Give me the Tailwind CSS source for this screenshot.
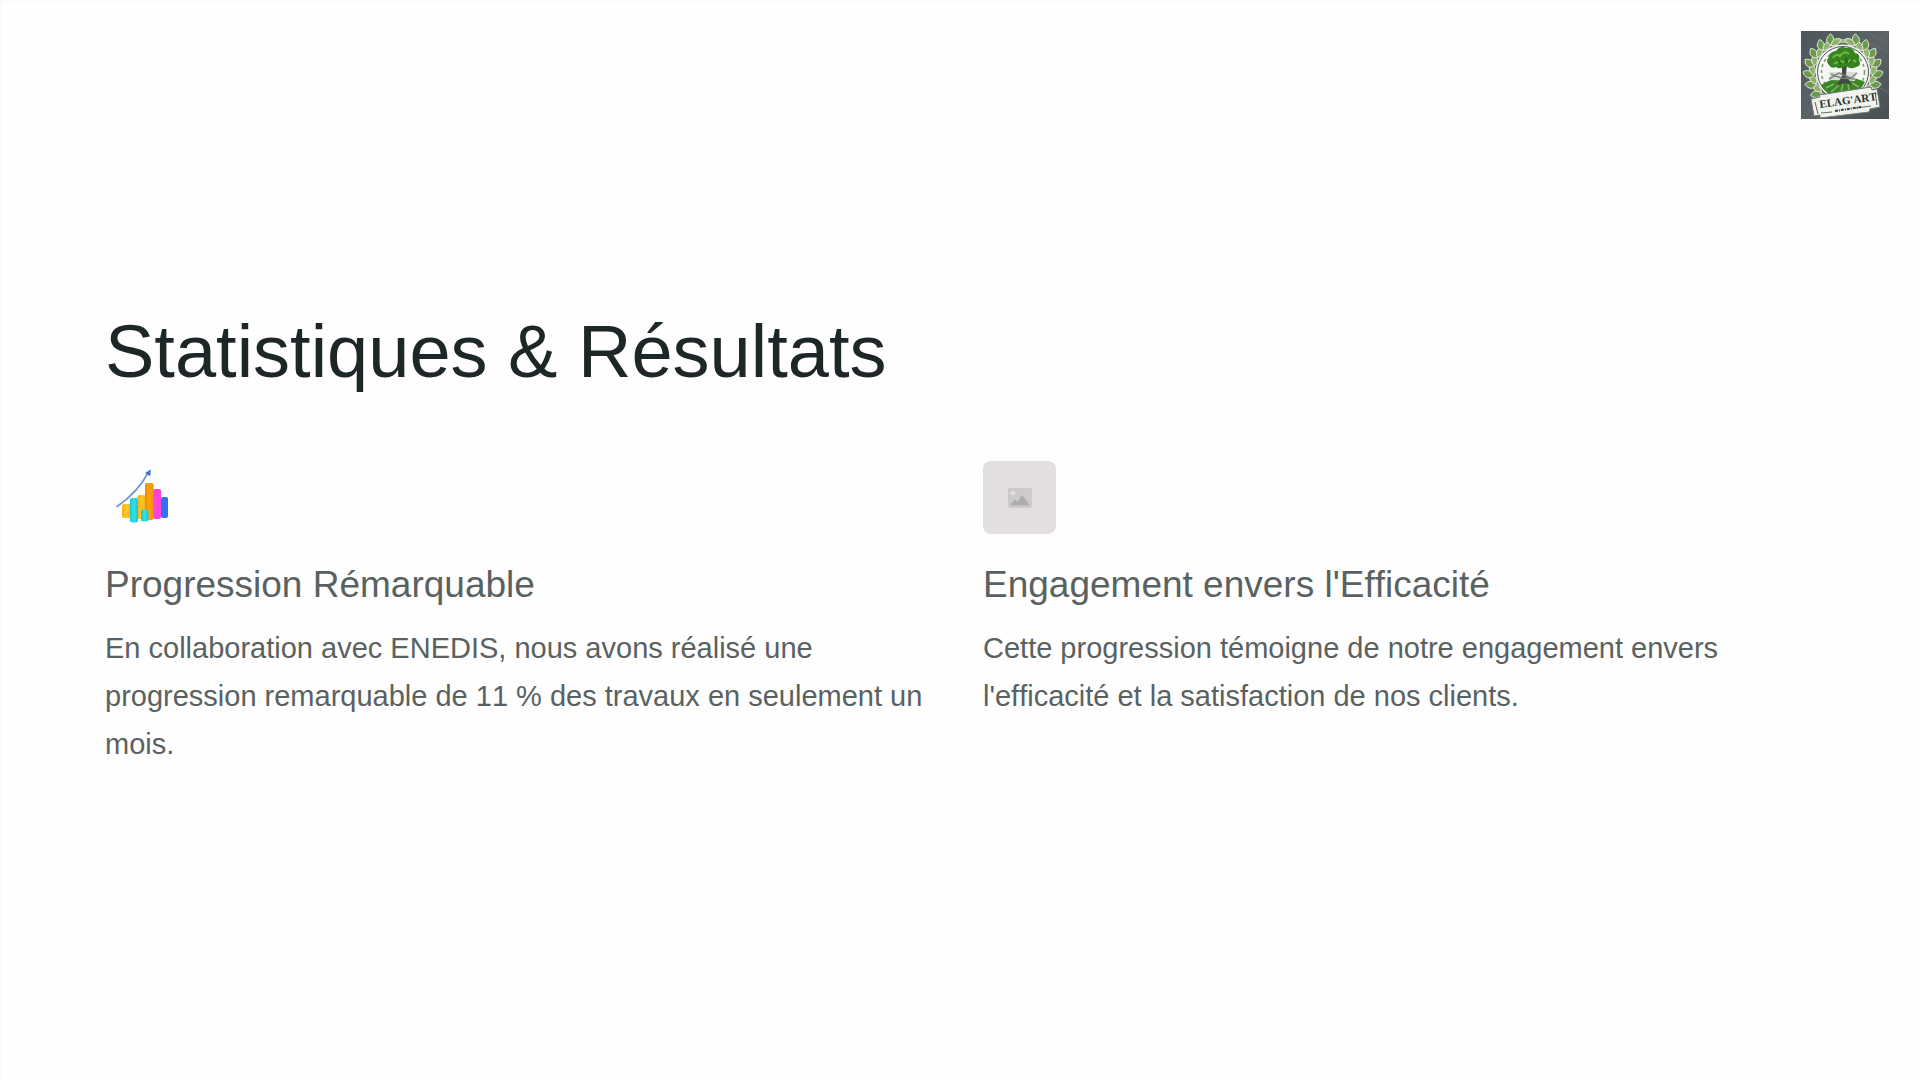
<!DOCTYPE html>
<html lang="fr">
<head>
<meta charset="utf-8">
<meta name="viewport" content="width=device-width, initial-scale=1">
<title>Statistiques &amp; Résultats</title>
<script src="https://cdn.jsdelivr.net/npm/@tailwindcss/browser@4"></script>
</head>
<body class="min-h-screen border-t border-l border-[#f9f9f9] bg-[#fefefe] font-['Liberation_Sans',Arial,sans-serif] text-[#5a6261] [font-kerning:none]">
<header class="flex justify-end pt-[30px] pr-[31px]">
  <svg class="size-[88px]" viewBox="0 0 88 88" role="img" aria-label="Logo Elag'Art">
    <defs>
      <linearGradient id="slate" x1="0" y1="0" x2="1" y2="1"><stop offset="0" stop-color="#4c5558"/><stop offset=".5" stop-color="#5c6467"/><stop offset="1" stop-color="#465053"/></linearGradient>
      <g id="leaf" stroke="#e6ecdc" stroke-width=".9">
        <path d="M-3-29C-8-34-6-38 0-40C3-36 1-31-3-29Z" fill="#6b9a4c"/>
        <path d="M-3-29C-1-34 4-35 8-32C6-28 1-26-3-29Z" fill="#8fb36d"/>
      </g>
    </defs>
    <rect width="88" height="88" fill="url(#slate)"/>
    <path d="M46 0L88 22M62 0L88 12M0 30L12 38M70 52L88 62" stroke="#666e71" stroke-width="1"/>
    <g transform="translate(42 41)">
      <circle r="31" fill="none" stroke="#a9bd96" stroke-width="4"/>
      <use href="#leaf" transform="rotate(-126)"/><use href="#leaf" transform="rotate(-108)"/><use href="#leaf" transform="rotate(-90)"/><use href="#leaf" transform="rotate(-72)"/><use href="#leaf" transform="rotate(-54)"/><use href="#leaf" transform="rotate(-36)"/><use href="#leaf" transform="rotate(-18)"/>
      <use href="#leaf" transform="scale(-1 1) rotate(-126)"/><use href="#leaf" transform="scale(-1 1) rotate(-108)"/><use href="#leaf" transform="scale(-1 1) rotate(-90)"/><use href="#leaf" transform="scale(-1 1) rotate(-72)"/><use href="#leaf" transform="scale(-1 1) rotate(-54)"/><use href="#leaf" transform="scale(-1 1) rotate(-36)"/><use href="#leaf" transform="scale(-1 1) rotate(-18)"/>
      <circle r="27.500" fill="#f3f5f0"/>
      <circle r="25.500" fill="#f7f8f5" stroke="#4c5752" stroke-width="1"/>
      <circle r="21.500" fill="none" stroke="#7b9f66" stroke-width="1.600" stroke-dasharray="3 3"/>
      <path d="M-22 13Q0-1 22 10Q14 25 0 25Q-16 25-22 13Z" fill="#3c8428"/>
      <path d="M-17 16L-9 12M-12 20L-4 13M-2 20L0 12M6 18L5 12M16 15L9 11" stroke="#85b65f" stroke-width="1.500"/>
      <path d="M-14 0L14 0L12 9L-13 8Z" fill="#d9ddd6"/>
      <path d="M-1-8H4L3 3L9 13L2 11L-6 13L-1 4Z" fill="#424a41"/>
      <path d="M-14 7L-4 1L8 6L14 1M-12 2L-2 6L12 7" fill="none" stroke="#7c837d" stroke-width="1.500"/>
      <path d="M-14-7Q-18-11-14-15Q-14-20-7-21Q-3-27 3-24Q10-25 12-19Q18-18 16-12Q19-6 13-5Q8-2 3-6Q-3-2-7-5Q-12-3-14-7Z" fill="#36841f"/>
      <path d="M-10-14Q-7-19-3-16Q1-22 6-18M-9-8Q-4-12 1-10M5-10Q9-14 13-10" fill="none" stroke="#6fb43c" stroke-width="2.200"/>
      <path d="M-5-12L-2-8M3-14L4-9M10-14L7-9" stroke="#1f5b15" stroke-width="1.400"/>
    </g>
    <path d="M10 68L19 66L18 64L70 56L71 59L76 58L79 76L69 78L68 81L19 87L19 84L13 85Z" fill="#f1f3ef" stroke="#707972" stroke-width="1"/>
    <path d="M14 71L17 83M74 61L76 74" stroke="#59615d" stroke-width="1"/>
    <text x="19" y="77" transform="rotate(-8 19 77)" font-family="Liberation Serif, serif" font-size="11" font-weight="700" fill="#29312e">ELAG'ART</text>
    <path d="M20 82L31 81M55 77L70 75" stroke="#69716d" stroke-width="1"/>
    <path d="M34 80L60 76" stroke="#39413d" stroke-width="2" stroke-dasharray="3 1 1 1"/>
  </svg>
</header>

<main class="px-[104px] pt-[187px] pb-16">
  <h1 class="text-[74px] leading-[92px] text-[#1d2727]">Statistiques &amp; Résultats</h1>
  <div class="mt-[63px] grid grid-cols-2 gap-[45px]">
    <section>
      <svg class="size-[73px]" viewBox="0 0 73 73" aria-hidden="true">
        <defs>
          <linearGradient id="gold"><stop stop-color="#f7ae20"/><stop offset=".5" stop-color="#ffc91f"/><stop offset="1" stop-color="#f5ae20"/></linearGradient>
          <linearGradient id="cyan"><stop stop-color="#1bc6d6"/><stop offset=".5" stop-color="#35e0e6"/><stop offset="1" stop-color="#16c7d7"/></linearGradient>
          <linearGradient id="amber"><stop stop-color="#f18a08"/><stop offset=".5" stop-color="#ffa20c"/><stop offset="1" stop-color="#f39009"/></linearGradient>
        </defs>
        <g transform="translate(-1 0)">
          <rect x="18" y="43" width="9" height="14" rx="2" fill="url(#gold)"/>
          <rect x="57" y="36" width="7" height="21" rx="2" fill="#3270f5"/>
          <rect x="49" y="28" width="8" height="30" rx="2" fill="#fb43dc"/>
          <rect x="33.500" y="34" width="8" height="24" rx="2" fill="url(#gold)"/>
          <rect x="41" y="22" width="8.500" height="37" rx="2" fill="url(#amber)"/>
          <rect x="26" y="37" width="8" height="24.500" rx="2" fill="url(#cyan)"/>
          <rect x="37" y="48.500" width="7.500" height="12" rx="2" fill="url(#cyan)"/>
          <path d="M12.500 46Q34 31 44 12" fill="none" stroke="#7298db" stroke-width="1.700"/>
          <path d="M46.500 9L41.500 12L46 14.800Z" fill="#3f70cc" stroke="#3f70cc" stroke-width=".6"/>
        </g>
      </svg>
      <h2 class="mt-7 text-[37px] leading-[46px]">Progression Rémarquable</h2>
      <p class="mt-4 text-[29px] leading-[48px]">En collaboration avec ENEDIS, nous avons réalisé une progression remarquable de 11 % des travaux en seulement un mois.</p>
    </section>
    <section>
      <div class="flex size-[73px] items-center justify-center rounded-lg bg-[#e4dfdf]">
        <svg class="h-5 w-6" viewBox="0 0 24 20" aria-hidden="true">
          <rect width="24" height="20" rx="2" fill="#cdcaca"/>
          <circle cx="5" cy="5" r="2.200" fill="#e6e2e2"/>
          <path d="M3 17.500V16L7 11.500L9.500 14L14 7L21 16V17.500Z" fill="#aeacac"/>
        </svg>
      </div>
      <h2 class="mt-7 text-[37px] leading-[46px]">Engagement envers l'Efficacité</h2>
      <p class="mt-4 text-[29px] leading-[48px]">Cette progression témoigne de notre engagement envers l'efficacité et la satisfaction de nos clients.</p>
    </section>
  </div>
</main>
</body>
</html>
